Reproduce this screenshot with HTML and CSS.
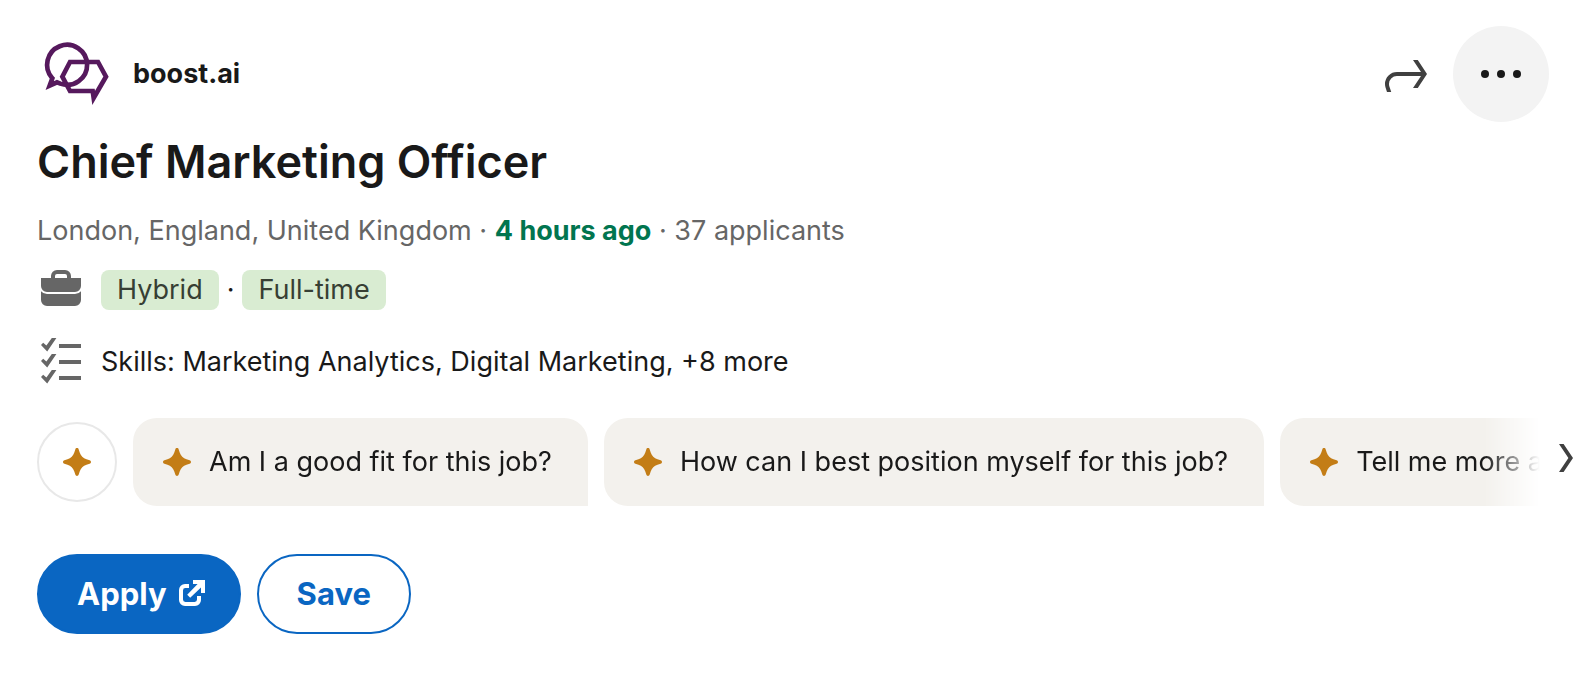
FILE: index.html
```html
<!DOCTYPE html>
<html lang="en">

<head>
    <meta charset="UTF-8">
    <meta name="viewport" content="width=device-width, initial-scale=1.0">
    <title>Chief Marketing Officer | boost.ai</title>
    <link rel="stylesheet" href="styles.css">
</head>

<body>
    <svg class="sprite" aria-hidden="true">
        <symbol id="sparkle" viewBox="0 0 32 32">
            <path d="M16 2c.9 0 1.400.5 1.700 1.400l1 3.100c1.100 3.400 3.400 5.700 6.800 6.800l3.100 1c.9.3 1.400.9 1.400 1.700s-.5 1.400-1.400 1.700l-3.100 1c-3.400 1.100-5.700 3.400-6.800 6.800l-1 3.100c-.3.9-.8 1.400-1.700 1.400s-1.400-.5-1.700-1.400l-1-3.100c-1.100-3.400-3.400-5.700-6.800-6.800l-3.100-1C2.500 17.400 2 16.800 2 16s.5-1.400 1.400-1.700l3.100-1c3.400-1.100 5.700-3.400 6.800-6.800l1-3.100C14.600 2.500 15.100 2 16 2z"/>
        </symbol>
    </svg>

    <main class="job">
        <header class="job-top">
            <a class="company" href="#">
                <svg class="company-logo" viewBox="0 0 240 240" aria-hidden="true">
                    <path d="M46 133A60 60 0 1 1 70 149L60 145L38 155Z"/>
                    <path d="M99 84H183L207 128L182 171L170 192L167 171H99L76 128Z"/>
                </svg>
                <span>boost.ai</span>
            </a>
            <div class="job-tools">
                <button class="share-btn" type="button" aria-label="Share">
                    <svg class="icon" viewBox="0 0 24 24"><path d="M23 12l-4.610 7H16l4-6H8a3.920 3.920 0 0 0-4 3.840V17a4 4 0 0 0 .190 1.240L5.120 21H3l-.730-2.220A6.400 6.400 0 0 1 2 16.940 6 6 0 0 1 8 11h12l-4-6h2.390z"/></svg>
                </button>
                <button class="more-btn" type="button" aria-label="More options">
                    <svg class="icon" viewBox="0 0 24 24"><circle cx="4" cy="12" r="2"/><circle cx="12" cy="12" r="2"/><circle cx="20" cy="12" r="2"/></svg>
                </button>
            </div>
        </header>

        <h1>Chief Marketing Officer</h1>
        <p class="job-meta">London, England, United Kingdom · <strong>4 hours ago</strong> · 37 applicants</p>

        <ul class="insights">
            <li>
                <svg class="icon" viewBox="0 0 24 24" aria-hidden="true"><path d="M17 6V5a3 3 0 0 0-3-3h-4a3 3 0 0 0-3 3v1H2v4a3 3 0 0 0 3 3h14a3 3 0 0 0 3-3V6zM9 5a1 1 0 0 1 1-1h4a1 1 0 0 1 1 1v1H9zm10 9a4 4 0 0 0 3-1.380V17a3 3 0 0 1-3 3H5a3 3 0 0 1-3-3v-4.380A4 4 0 0 0 5 14z"/></svg>
                <div class="tags">
                    <span class="tag">Hybrid</span>
                    <span>·</span>
                    <span class="tag">Full-time</span>
                </div>
            </li>
            <li>
                <svg class="icon" viewBox="0 0 24 24" aria-hidden="true"><path d="M11 4h11v2H11zM11 12h11v2H11zM11 20h11v2H11zM7.400 1h2.300L5.100 7.700 2 4.500l1.100-1.100 1.600 1.400zM7.400 9h2.300L5.100 15.700 2 12.500l1.100-1.100 1.600 1.400zM7.400 17h2.300L5.100 23.700 2 20.500l1.100-1.100 1.600 1.400z"/></svg>
                <a class="skills" href="#">Skills: Marketing Analytics, Digital Marketing, +8 more</a>
            </li>
        </ul>

        <div class="assistant">
            <button class="assistant-btn" type="button" aria-label="Ask the assistant">
                <svg class="sparkle"><use href="#sparkle"/></svg>
            </button>
            <div class="prompts">
                <button class="prompt" type="button"><svg class="sparkle"><use href="#sparkle"/></svg>Am I a good fit for this job?</button>
                <button class="prompt" type="button"><svg class="sparkle"><use href="#sparkle"/></svg>How can I best position myself for this job?</button>
                <button class="prompt" type="button"><svg class="sparkle"><use href="#sparkle"/></svg>Tell me more about boost.ai</button>
            </div>
            <button class="next-btn" type="button" aria-label="Next">
                <svg class="icon" viewBox="0 0 24 24"><path d="M9.500 5h2.300l4.700 7-4.700 7H9.500l4.700-7z"/></svg>
            </button>
        </div>

        <div class="actions">
            <button class="btn btn-primary" type="button">
                Apply
                <svg class="btn-icon" viewBox="0 0 16 16" aria-hidden="true"><path d="M15 1v6.500h-2V4.700L7.600 9.900 6.100 8.400 11.300 3H9V1zM7 3v2H5.200A1.200 1.200 0 0 0 4 6.200v4.600A1.200 1.200 0 0 0 5.200 12h4.600a1.200 1.200 0 0 0 1.200-1.200V9h2v2a3 3 0 0 1-3 3H5a3 3 0 0 1-3-3V6a3 3 0 0 1 3-3z"/></svg>
            </button>
            <button class="btn btn-outline" type="button">Save</button>
        </div>
    </main>
</body>

</html>
```

FILE: styles.css
```css
* {
    margin: 0;
    padding: 0;
    box-sizing: border-box;
}

body {
    font-family: Inter, 'Liberation Sans', sans-serif;
    font-size: 27px;
    line-height: 40px;
    color: #191919;
    background: #fff;
}

button {
    font: inherit;
    color: inherit;
    background: none;
    border: none;
    cursor: pointer;
}

a {
    color: inherit;
    text-decoration: none;
}

svg {
    display: block;
    flex-shrink: 0;
    fill: currentColor;
}

.sprite {
    display: none;
}

.icon {
    width: 48px;
    height: 48px;
}

.job {
    padding: 26px 0 40px 37px;
}

.job-top {
    display: flex;
    justify-content: space-between;
    align-items: center;
    padding-right: 39px;
}

.company {
    display: flex;
    align-items: center;
    gap: 16px;
    font-weight: 700;
}

.company-logo {
    width: 80px;
    height: 80px;
    fill: none;
    stroke: #56195d;
    stroke-width: 14;
}

.job-tools {
    display: flex;
    align-items: center;
    gap: 24px;
}

.share-btn {
    color: #404040;
}

.more-btn {
    display: flex;
    justify-content: center;
    align-items: center;
    width: 96px;
    height: 96px;
    border-radius: 50%;
    background: #f3f3f3;
}

h1 {
    margin-top: 10px;
    font-size: 45px;
    line-height: 60px;
    font-weight: 600;
}

.job-meta {
    margin-top: 19px;
    color: #666;
}

.job-meta strong {
    font-weight: 700;
    color: #01754f;
}

.insights {
    display: grid;
    gap: 22px;
    margin-top: 15px;
    list-style: none;
}

.insights li {
    display: flex;
    align-items: center;
    gap: 16px;
}

.insights .icon {
    color: #666;
}

.tags {
    display: flex;
    align-items: center;
    gap: 8px;
}

.tag {
    padding: 0 16px;
    border-radius: 8px;
    background: #d9ecd2;
    color: #373f34;
}

.skills {
    padding-top: 4px;
}

.assistant {
    display: flex;
    align-items: center;
    margin-top: 34px;
}

.assistant-btn {
    display: flex;
    flex-shrink: 0;
    justify-content: center;
    align-items: center;
    width: 80px;
    height: 80px;
    margin-right: 16px;
    border: 2px solid #e8e8e8;
    border-radius: 50%;
}

.sparkle {
    width: 32px;
    height: 32px;
    fill: #c37d16;
}

.prompts {
    display: flex;
    flex: 1;
    gap: 16px;
    min-width: 0;
    overflow: hidden;
    mask-image: linear-gradient(to left, transparent, #000 56px);
}

.prompt {
    display: flex;
    flex-shrink: 0;
    align-items: center;
    gap: 16px;
    padding: 24px 36px 24px 28px;
    border-radius: 24px 24px 0 24px;
    background: #f3f1ed;
    white-space: nowrap;
}

.next-btn {
    flex-shrink: 0;
    padding-bottom: 8px;
    color: #404040;
}

.actions {
    display: flex;
    gap: 16px;
    margin-top: 48px;
}

.btn {
    display: flex;
    align-items: center;
    gap: 8px;
    height: 80px;
    padding: 0 38px;
    border: 2px solid #0a66c2;
    border-radius: 40px;
    font-size: 31px;
    font-weight: 700;
}

.btn-primary {
    padding-right: 32px;
    background: #0a66c2;
    color: #fff;
}

.btn-outline {
    color: #0a66c2;
}

.btn-icon {
    width: 32px;
    height: 32px;
}
```
